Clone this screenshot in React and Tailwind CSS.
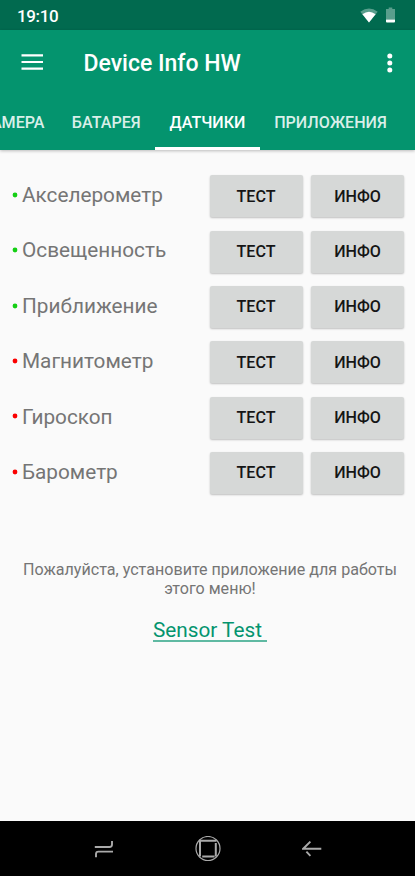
import React from 'react';

const tabs = [
  { label: 'КАМЕРА', className: 'w-[84px] pr-[6px] pt-[2px] text-[#d9efe9]' },
  { label: 'БАТАРЕЯ', className: 'w-[97.5px] pt-[2px] text-[#d9efe9]' },
  { label: 'ДАТЧИКИ', className: 'w-[105px] text-white border-b-[3px] border-white pt-[5px]', active: true },
  { label: 'ПРИЛОЖЕНИЯ', className: 'w-[141px] pt-[2px] text-[#d9efe9]' },
];

const sensors = [
  { name: 'Акселерометр', available: true },
  { name: 'Освещенность', available: true },
  { name: 'Приближение', available: true },
  { name: 'Магнитометр', available: false },
  { name: 'Гироскоп', available: false },
  { name: 'Барометр', available: false },
];

function StatusBar() {
  return (
    <div className="flex h-[30px] shrink-0 items-center bg-[#016a4f] pl-[17px] pr-[20px] text-white">
      <span className="text-[17px] font-medium leading-none tracking-[-0.35px] pt-[2px]">19:10</span>
      <svg className="ml-auto h-[15px] w-[18px]" viewBox="0 0 18 15" aria-hidden="true">
        <path d="M0.3 3.7Q9 -2.7 17.7 3.7L9 14.5Z" fill="#fff" fillOpacity="0.35" />
        <path d="M2.4 6.3Q9 1 15.6 6.3L9 14.5Z" fill="#fff" />
      </svg>
      <svg className="ml-[8px] h-[16px] w-[9px]" viewBox="0 0 9 16" aria-hidden="true">
        <path d="M2.7 0.5h3.6v1.5H9V12.5H0V2h2.7z" fill="#fff" fillOpacity="0.35" />
        <path d="M0 12.4h9v2.2q0 .9-.9.9H.9q-.9 0-.9-.9z" fill="#fff" />
      </svg>
    </div>
  );
}

function Toolbar() {
  return (
    <div className="flex h-[65px] items-center pl-[21px] pr-[22px]">
      <svg className="h-[16px] w-[22px] -mt-px" viewBox="0 0 22 16" aria-hidden="true">
        <path d="M0.5 1.3h21.5M0.5 8h21.5M0.5 14.7h21.5" stroke="#fff" strokeWidth="2.2" />
      </svg>
      <h1 className="ml-[40.5px] pt-[2px] text-[23px] font-medium leading-none">Device Info HW</h1>
      <svg className="ml-auto h-[20px] w-[6px]" viewBox="0 0 6 20" fill="#fff" aria-hidden="true">
        <circle cx="2.8" cy="3" r="2.5" />
        <circle cx="2.8" cy="10" r="2.5" />
        <circle cx="2.8" cy="17" r="2.5" />
      </svg>
    </div>
  );
}

function TabBar() {
  return (
    <div className="flex h-[55px] overflow-hidden" role="tablist">
      <div className="-ml-[26.5px] flex shrink-0">
        {tabs.map((tab) => (
          <div
            key={tab.label}
            role="tab"
            aria-selected={!!tab.active}
            className={`flex h-[55px] shrink-0 items-center justify-center text-[16.1px] font-medium ${tab.className}`}
          >
            {tab.label}
          </div>
        ))}
      </div>
    </div>
  );
}

function SensorButton({ children }) {
  return (
    <button className="h-[42px] w-[93px] rounded-[2px] bg-[#d6d8d7] pt-px text-[16.1px] font-medium text-[#151515] shadow-[0_1px_2px_rgba(0,0,0,0.24)]">
      {children}
    </button>
  );
}

function SensorRow({ sensor }) {
  return (
    <li className="flex h-[55.35px] items-center">
      <svg
        className={`-mt-[2.5px] size-[6px] ${sensor.available ? 'text-[#14cf14]' : 'text-[#fb0000]'}`}
        viewBox="0 0 6 6"
        aria-hidden="true"
      >
        <circle cx="3" cy="3" r="2.4" fill="currentColor" />
      </svg>
      <span className="-mt-[1.5px] ml-[4px] text-[20.75px] leading-none text-[#757575]">{sensor.name}</span>
      <div className="ml-auto flex gap-[8.5px]">
        <SensorButton>ТЕСТ</SensorButton>
        <SensorButton>ИНФО</SensorButton>
      </div>
    </li>
  );
}

function NavigationBar() {
  return (
    <div className="grid h-[55px] shrink-0 grid-cols-[103.5px_1fr_103.5px] items-center bg-black text-[#aaaaaa]">
      <svg className="h-[18px] w-[20px] justify-self-end -mr-[10px]" viewBox="0 0 20 18" fill="none" stroke="currentColor" strokeWidth="1.9" aria-hidden="true">
        <path d="M0.8 7H15.5Q18 7 18 4.5V1M19 11.6H4.5Q2 11.6 2 14V17.2" />
      </svg>
      <svg className="size-[26px] justify-self-center" viewBox="0 0 26 26" fill="none" stroke="currentColor" aria-hidden="true">
        <circle cx="13" cy="12.5" r="12" strokeWidth="1.2" />
        <path d="M4 4.8H21.5M20.8 7V20.5M19.5 20.5H7.2M5 20.5V4.8" strokeWidth="2" />
      </svg>
      <svg className="h-[16px] w-[20px] -ml-[10px]" viewBox="0 0 20 16" fill="none" stroke="currentColor" strokeWidth="1.9" aria-hidden="true">
        <path d="M8.4 0.6L1.2 7.7H19.3M4.4 10.7L8.4 14.8" />
      </svg>
    </div>
  );
}

export default function App() {
  return (
    <div className="flex h-screen w-full flex-col overflow-hidden bg-[#fafafa] font-['Roboto',sans-serif]">
      <StatusBar />
      <header className="h-[120px] shrink-0 bg-[#04946e] text-white shadow-[0_1px_3px_rgba(0,0,0,0.25)]">
        <Toolbar />
        <TabBar />
      </header>

      <main className="flex-1 pt-[18.6px]">
        <ul className="pl-[12px] pr-[11px]">
          {sensors.map((sensor) => (
            <SensorRow key={sensor.name} sensor={sensor} />
          ))}
        </ul>
        <div className="mt-[59.3px] pl-[5px] text-center">
          <p className="text-[16.1px] leading-[19px] text-[#757575]">
            Пожалуйста, установите приложение для работы
            <br />
            этого меню!
          </p>
          <a href="#" className="mt-[22px] inline-block whitespace-pre border-b-2 border-[#5fb9a2] text-[20.75px] leading-[20px] text-[#04946e]">
            {'Sensor Test '}
          </a>
        </div>
      </main>

      <NavigationBar />
    </div>
  );
}
